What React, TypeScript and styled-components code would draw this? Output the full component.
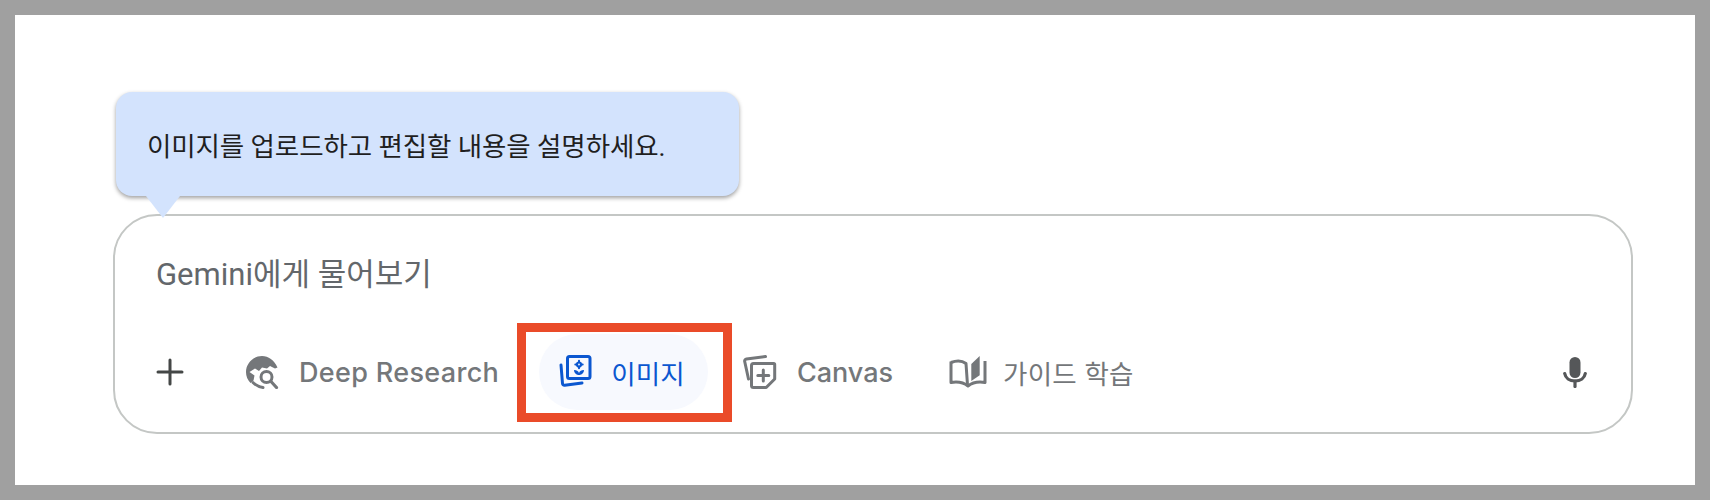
import { FC, ReactNode } from "react";
import styled, { createGlobalStyle } from "styled-components";

const GlobalStyle = createGlobalStyle`
    html, body {
        margin: 0;
        padding: 0;
        background: #ffffff;
    }
    body {
        font-family: "Inter", "Noto Sans CJK KR", sans-serif;
    }
`;

const Frame = styled.div`
    box-sizing: border-box;
    width: 1710px;
    height: 500px;
    border: 15px solid #a0a0a0;
    background: #ffffff;
    padding: 77px 0 0 98px;
    display: flex;
    flex-direction: column;
    align-items: flex-start;
`;

const Tooltip = styled.div`
    position: relative;
    z-index: 1;
    box-sizing: border-box;
    width: 623px;
    height: 104px;
    margin: 0 0 18px 3px;
    padding-left: 31px;
    display: flex;
    align-items: center;
    background: #d3e3fd;
    border-radius: 16px;
    box-shadow: 0 2px 4px rgba(0, 0, 0, 0.38);
    color: #1f1f1f;
    font-family: "Roboto", "Noto Sans CJK KR", sans-serif;
    font-size: 26.5px;
    letter-spacing: -0.1px;

    &::after {
        content: "";
        position: absolute;
        left: 30px;
        top: 100%;
        border-left: 17px solid transparent;
        border-right: 17px solid transparent;
        border-top: 22px solid #d3e3fd;
    }
`;

const Card = styled.div`
    box-sizing: border-box;
    width: 1520px;
    height: 220px;
    border: 2px solid #c4c7c5;
    border-radius: 44px;
    padding: 0 0 0 41px;
    display: flex;
    flex-direction: column;
`;

const Placeholder = styled.div`
    height: 110px;
    display: flex;
    align-items: center;
    color: #63676b;
    font-family: "Roboto", "Noto Sans CJK KR", sans-serif;
    font-size: 31px;
`;

const Toolbar = styled.div`
    display: flex;
    align-items: center;
    height: 76px;
    margin-top: 8px;
`;

const PlusButton = styled.div`
    width: 28px;
    height: 28px;
    margin-right: 42px;
    color: #444746;
    display: flex;
`;

const Chip = styled.div<{ $active?: boolean; $after: number; $tracking?: number }>`
    position: relative;
    box-sizing: border-box;
    height: 76px;
    padding: 0 ${(props) => (props.$active ? 23 : 26)}px 0 19px;
    margin-right: ${(props) => props.$after}px;
    display: flex;
    align-items: center;
    gap: ${(props) => (props.$active ? 19 : 20)}px;
    border-radius: 38px;
    font-size: 27px;
    font-weight: 500;
    letter-spacing: ${(props) => props.$tracking ?? 0}px;
    white-space: nowrap;
    color: ${(props) => (props.$active ? "#0b57d0" : "#74777a")};
    background: ${(props) => (props.$active ? "#f7f9fe" : "transparent")};
`;

const ChipLabel = styled.span`
    font-size: 26.5px;
    font-weight: 400;
    letter-spacing: 0.2px;
`;

const IconSlot = styled.span`
    display: flex;
    align-items: center;
    width: 34px;
    height: 34px;

    svg {
        flex-shrink: 0;
    }
`;

const Highlight = styled.div`
    position: absolute;
    left: -22px;
    right: -24px;
    top: -11px;
    bottom: -12px;
    border: 9px solid #ea4b29;
    pointer-events: none;
`;

const MicButton = styled.div`
    margin-left: auto;
    margin-right: 44px;
    width: 24px;
    height: 31px;
    color: #555759;
    display: flex;
`;

const PlusIcon = () => (
    <svg viewBox="0 0 28 28" width="28" height="28">
        <path d="M14 2v24M2 14h24" stroke="currentColor" strokeWidth="3" strokeLinecap="round" fill="none" />
    </svg>
);

const GlobeIcon = () => (
    <svg viewBox="0 0 34 34" width="34" height="34" fill="none">
        <path
            d="M17 1C8 1 1 8.500 1 17c0 4 1.500 8 4.500 11l3-2.500 1-5-5-3.500 5.500-3.500 4 2.500 3-3.500 5 1 3-2.500 5 2.500 2.500-1C29 5 23.500 1 17 1z"
            fill="currentColor"
        />
        <path d="M8 27.500c3 3 6 4.500 10 5" stroke="currentColor" strokeWidth="3" strokeLinecap="round" />
        <circle cx="21.500" cy="22" r="5.500" stroke="currentColor" strokeWidth="3" />
        <path d="M26 26.500l5.500 6" stroke="currentColor" strokeWidth="3.200" strokeLinecap="round" />
    </svg>
);

const ImageIcon = () => (
    <svg viewBox="0 0 34 34" width="34" height="34" fill="none">
        <rect x="9.500" y="1.500" width="22.500" height="22" rx="2" stroke="currentColor" strokeWidth="3" />
        <path d="M3 10l1.500 18.500c.1 1.200 1 1.900 2.200 1.700L24 28" stroke="currentColor" strokeWidth="3" strokeLinecap="round" />
        <circle cx="21" cy="9.500" r="2" stroke="currentColor" strokeWidth="2.200" />
        <path d="M21 5.800v1M21 12.200v1M17.300 9.500h1M23.700 9.500h1" stroke="currentColor" strokeWidth="2" strokeLinecap="round" />
        <path d="M16 15c2.800 0 5 1.200 5 3.500 0-2.300 2.200-3.500 5-3.500 0 2.800-2.200 5-5 5s-5-2.200-5-5z" fill="currentColor" />
    </svg>
);

const CanvasIcon = () => (
    <svg viewBox="0 0 34 34" width="34" height="34" fill="none">
        <path d="M5.500 24L1.700 6.500C1.400 5.200 2.200 4.200 3.500 4L22.500 1.500" stroke="currentColor" strokeWidth="3" strokeLinecap="round" />
        <path
            d="M8.500 10.500c0-1.200.8-2 2-2h20.200c.6 0 1 .4 1 1V24l-8.500 8.500H10.500c-1.200 0-2-.8-2-2z"
            stroke="currentColor"
            strokeWidth="3"
            strokeLinejoin="round"
        />
        <path d="M20.300 15v11M14.800 20.500h11" stroke="currentColor" strokeWidth="3" strokeLinecap="round" />
    </svg>
);

const BookIcon = () => (
    <svg viewBox="0 0 38 32" width="38" height="32" fill="none">
        <path d="M2 6.500C7 4.500 13 4.500 17 7.500L18.500 29" stroke="currentColor" strokeWidth="3" strokeLinejoin="round" />
        <path d="M2 5.500V26.500c6-1 12-.5 17 3.500 5-4 11-4.500 17-3.500V5" stroke="currentColor" strokeWidth="3" strokeLinejoin="round" />
        <path d="M22.300 8L30.700 0V19.300L22.300 25z" fill="currentColor" />
    </svg>
);

const MicIcon = () => (
    <svg viewBox="0 0 24 31" width="24" height="31" fill="none">
        <rect x="6.500" y="0" width="11" height="21" rx="5.500" fill="currentColor" />
        <path d="M1.700 16.500C2.500 21 6.500 24 12 24s9.500-3 10.300-7.500" stroke="currentColor" strokeWidth="3.200" strokeLinecap="round" />
        <path d="M12 24v5.500" stroke="currentColor" strokeWidth="3.200" strokeLinecap="round" />
    </svg>
);

interface ToolChipProps {
    icon: ReactNode;
    label: string;
    active?: boolean;
    korean?: boolean;
    after?: number;
    tracking?: number;
}

const ToolChip: FC<ToolChipProps> = ({ icon, label, active, korean, after = 16, tracking }) => (
    <Chip $active={active} $after={after} $tracking={tracking}>
        <IconSlot>{icon}</IconSlot>
        {korean ? <ChipLabel>{label}</ChipLabel> : label}
        {active && <Highlight />}
    </Chip>
);

const App: FC = () => {
    return (
        <>
            <GlobalStyle />
            <Frame>
                <Tooltip>이미지를 업로드하고 편집할 내용을 설명하세요.</Tooltip>
                <Card>
                    <Placeholder>Gemini에게 물어보기</Placeholder>
                    <Toolbar>
                        <PlusButton>
                            <PlusIcon />
                        </PlusButton>
                        <ToolChip icon={<GlobeIcon />} label='Deep Research' tracking={0.33} after={14} />
                        <ToolChip icon={<ImageIcon />} label='이미지' active korean />
                        <ToolChip icon={<CanvasIcon />} label='Canvas' after={11} />
                        <ToolChip icon={<BookIcon />} label='가이드 학습' korean />
                        <MicButton>
                            <MicIcon />
                        </MicButton>
                    </Toolbar>
                </Card>
            </Frame>
        </>
    );
};

export default App;
